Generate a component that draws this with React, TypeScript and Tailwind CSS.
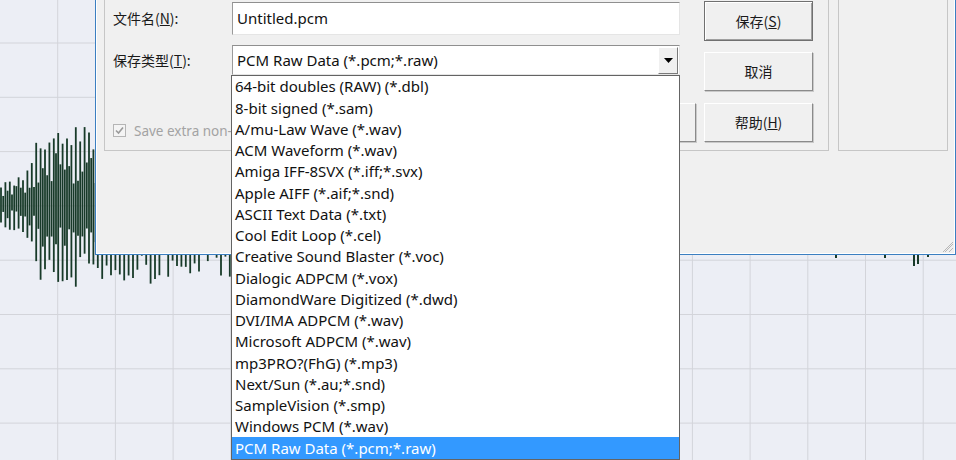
import React from 'react';

const fileTypes = [
  '64-bit doubles (RAW) (*.dbl)',
  '8-bit signed (*.sam)',
  'A/mu-Law Wave (*.wav)',
  'ACM Waveform (*.wav)',
  'Amiga IFF-8SVX (*.iff;*.svx)',
  'Apple AIFF (*.aif;*.snd)',
  'ASCII Text Data (*.txt)',
  'Cool Edit Loop (*.cel)',
  'Creative Sound Blaster (*.voc)',
  'Dialogic ADPCM (*.vox)',
  'DiamondWare Digitized (*.dwd)',
  'DVI/IMA ADPCM (*.wav)',
  'Microsoft ADPCM (*.wav)',
  'mp3PRO?(FhG) (*.mp3)',
  'Next/Sun (*.au;*.snd)',
  'SampleVision (*.smp)',
  'Windows PCM (*.wav)',
  'PCM Raw Data (*.pcm;*.raw)',
];

const rnd = (i: number) => {
  const s = Math.sin(i * 12.9898 + 4.1) * 43758.5453;
  return s - Math.floor(s);
};

const envelope = (x: number) => {
  if (x < 25) return 20 + x * 0.5;
  if (x < 45) return 33 + (x - 25) * 2.8;
  if (x < 100) return 88 - (x - 45) * 0.2;
  if (x < 232) return 86 - (x - 100) * 0.08;
  return 0;
};

const Waveform: React.FC = () => {
  const bars: { x: number; y1: number; y2: number }[] = [];
  for (let i = 0; i < 106; i++) {
    const x = 1 + i * 2.2;
    const e = envelope(x);
    if (!e) continue;
    const inner = i % 2 === 1;
    const k = inner ? 0.3 : 0.6;
    bars.push({
      x,
      y1: 203 - e * (k + (1 - k) * rnd(i)) * (inner ? 0.6 : 1),
      y2: 205 + e * (k + (1 - k) * rnd(i + 91)) * (inner ? 0.6 : 1),
    });
  }
  const spikes = [
    { x: 836, y2: 258 },
    { x: 885, y2: 258 },
    { x: 914, y2: 266 },
    { x: 918, y2: 264 },
    { x: 928, y2: 257 },
  ];
  return (
    <svg className="absolute inset-0" width="956" height="460" viewBox="0 0 956 460">
      <rect width="956" height="460" fill="#eceef5" />
      {Array.from({ length: 17 }, (_, k) => (
        <line key={'v' + k} x1={57.7 * (k + 1)} y1="0" x2={57.7 * (k + 1)} y2="460" stroke="#d3d4da" strokeWidth="1" />
      ))}
      {Array.from({ length: 8 }, (_, k) => (
        <line key={'h' + k} x1="0" y1={43 + 54.3 * k} x2="956" y2={43 + 54.3 * k} stroke="#d3d4da" strokeWidth="1" />
      ))}
      {bars.map((b, i) => (
        <line key={i} x1={b.x} y1={b.y1} x2={b.x} y2={b.y2} stroke="#183a29" strokeWidth="1.8" />
      ))}
      {spikes.map((s, i) => (
        <line key={'s' + i} x1={s.x} y1="250" x2={s.x} y2={s.y2} stroke="#183a29" strokeWidth="2" />
      ))}
    </svg>
  );
};

const Btn: React.FC<{ label?: string; hot?: string; def?: boolean; className?: string }> = ({ label, hot, def, className }) => (
  <div
    className={`flex items-center justify-center bg-[#f0f0f0] text-[14px] text-[#1a1a1a] border ${
      def ? 'border-[#707070] shadow-[inset_1px_1px_0_#fff,inset_-1px_-1px_0_#a0a0a0]' : 'border-t-white border-l-white border-b-[#8a8a8a] border-r-[#8a8a8a] shadow-[1px_1px_0_#c9c9c9]'
    } ${className ?? ''}`}
  >
    {label && (
      <span>
        {label}
        {hot && (
          <>
            (<span className="underline">{hot}</span>)
          </>
        )}
      </span>
    )}
  </div>
);

export default function App() {
  return (
    <div
      className="relative w-[956px] h-[460px] overflow-hidden bg-[#eceef5]"
      style={{ fontFamily: '"Noto Sans", "Noto Sans CJK SC", sans-serif' }}
    >
      <Waveform />

      {/* save dialog */}
      <div className="absolute left-[95px] top-0 w-[861px] h-[255px] bg-[#f0f0f0] border-l border-r border-b border-[#3b7fc1]">
        <div className="flex gap-[9px] pl-[7px] pr-[6px] border-l border-r border-b border-white h-full">
          {/* main panel */}
          <div className="w-[727px] h-[151px] border-l border-r border-b border-[#c6c6c6] flex pl-[8px] gap-[8px]">
            <div className="w-[583px] flex flex-col" style={{ fontFamily: '"Noto Sans CJK SC", sans-serif' }}>
              <div className="flex items-center mt-[1px] h-[34px]">
                <div className="w-[119px] text-[14px] text-[#1a1a1a]">
                  文件名(<span className="underline">N</span>):
                </div>
                <div className="w-[448px] h-[33px] bg-white border border-t-[#8f8f8f] border-l-[#9a9a9a] border-b-[#e5e5e5] border-r-[#e5e5e5] flex items-center pl-[4px]">
                  <span className="text-[15px] text-[#111]" style={{ fontFamily: '"Noto Sans", sans-serif' }}>Untitled.pcm</span>
                </div>
              </div>
              <div className="flex items-center mt-[10px] h-[30px]">
                <div className="w-[119px] text-[14px] text-[#1a1a1a]">
                  保存类型(<span className="underline">T</span>):
                </div>
                <div className="w-[448px] h-[30px] bg-white border border-t-[#8f8f8f] border-l-[#9a9a9a] border-b-[#e5e5e5] border-r-[#e5e5e5] flex items-center pl-[4px]">
                  <span className="flex-1 text-[15px] text-[#111]" style={{ fontFamily: '"Noto Sans", sans-serif' }}>PCM Raw Data (*.pcm;*.raw)</span>
                  <div className="w-[20px] h-[27px] mr-[1px] bg-[#f0f0f0] border border-t-white border-l-white border-b-[#7a7a7a] border-r-[#7a7a7a] flex items-center justify-center">
                    <svg width="9" height="5" viewBox="0 0 9 5">
                      <path d="M0 0h9L4.5 5z" fill="#000" />
                    </svg>
                  </div>
                </div>
              </div>
              <div className="flex items-end justify-between mt-[28px] h-[39px]">
                <div className="flex items-center gap-[8px] mb-[1px]">
                  <div className="w-[13px] h-[13px] border border-[#b5b5b5] bg-[#f4f4f4] flex items-center justify-center">
                    <svg width="11" height="11" viewBox="0 0 11 11">
                      <path d="M2 5.5l2.5 2.5L9 2.5" stroke="#9a9a9a" strokeWidth="1.6" fill="none" />
                    </svg>
                  </div>
                  <span className="text-[13.5px] text-[#a3a3a3] whitespace-nowrap" style={{ fontFamily: '"Noto Sans", sans-serif' }}>
                    Save extra non-
                  </span>
                </div>
                <Btn className="w-[96px] h-[39px]" />
              </div>
            </div>
            <div className="flex flex-col w-[109px]" style={{ fontFamily: '"Noto Sans CJK SC", sans-serif' }}>
              <Btn label="保存" hot="S" def className="h-[40px] mt-[1px]" />
              <Btn label="取消" className="h-[39px] mt-[11px]" />
              <Btn label="帮助" hot="H" className="h-[39px] mt-[12px]" />
            </div>
          </div>
          {/* side panel */}
          <div className="w-[110px] h-[151px] border-l border-r border-b border-[#c6c6c6]" />
        </div>
        {/* resize grip */}
        <svg className="absolute right-[1px] bottom-[1px]" width="12" height="12" viewBox="0 0 12 12">
          <path d="M11 3L3 11M11 7L7 11M11 1L1 11" stroke="#b7b7b7" strokeWidth="1" />
        </svg>
      </div>

      {/* dropdown list */}
      <div className="absolute left-[231px] top-[75px] w-[449px] bg-white border border-[#646464]">
        {fileTypes.map((t, i) => (
          <div
            key={t}
            className={`h-[21.25px] flex items-center pl-[3px] text-[15px] whitespace-nowrap ${
              i === fileTypes.length - 1 ? 'bg-[#3399ff] text-white' : 'text-[#111]'
            }`}
          >
            {t}
          </div>
        ))}
      </div>
    </div>
  );
}
